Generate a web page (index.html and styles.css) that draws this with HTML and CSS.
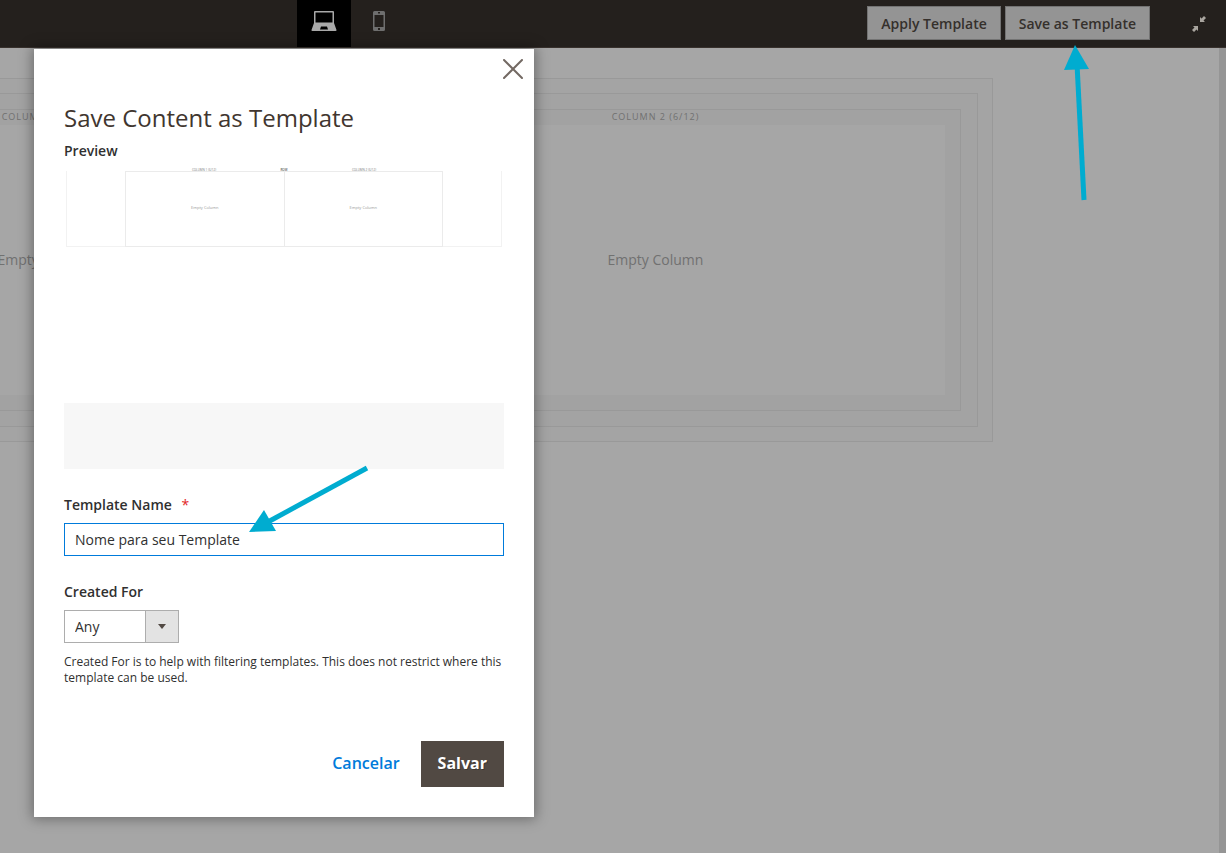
FILE: index.html
```html
<!DOCTYPE html>
<html lang="pt-BR">
<head>
<meta charset="utf-8">
<meta name="viewport" content="width=device-width, initial-scale=1">
<title>Save Content as Template</title>
<link rel="stylesheet" href="styles.css">
</head>
<body>
<div class="page">
  <header class="toolbar">
    <div class="viewports">
      <button class="viewport active" type="button" aria-label="Desktop">
        <svg width="26" height="22" viewBox="0 0 26 22"><path fill="#a9a9a9" fill-rule="evenodd" d="M3 1q0-1 1-1h18q1 0 1 1v11H3zM4.500 1.500v10h17v-10zM3 12h20l2.500 7q.3 1-1 1h-23q-1.300 0-1-1zM10 15.500L9 18.500h8l-1-3z"/></svg>
      </button>
      <button class="viewport" type="button" aria-label="Mobile">
        <svg width="12" height="22" viewBox="0 0 12 22"><path fill="#6e6e6e" fill-rule="evenodd" d="M1.500 0h9Q12 0 12 1.500v17q0 1.500-1.500 1.500h-9Q0 20 0 18.500v-17Q0 0 1.500 0zM1.500 4v12h9V4zM5 1v1.500h2V1zM5 17v2h2v-2z"/></svg>
      </button>
    </div>
    <div class="actions">
      <button class="tool" type="button">Apply Template</button>
      <button class="tool" type="button">Save as Template</button>
    </div>
    <button class="shrink" type="button" aria-label="Exit fullscreen">
      <svg width="16" height="16" viewBox="0 0 16 16" fill="#a9a59f"><path d="M9 1l1.500 1.500L13 0l2 2-2.500 2.500L14 6H9zM2 10h5v5l-1.500-1.500L3 16l-2-2 2.500-2.500z"/></svg>
    </button>
  </header>

  <main class="stage">
    <section class="canvas">
      <div class="row-box">
        <div class="columns">
          <div class="column"><span class="column-name">COLUMN 1 (6/12)</span><div class="empty">Empty Column</div></div>
          <div class="column"><span class="column-name">COLUMN 2 (6/12)</span><div class="empty">Empty Column</div></div>
        </div>
      </div>
    </section>
    <div class="scrollbar"></div>
  </main>

  <form class="modal" role="dialog" aria-labelledby="modal-title">
    <button class="close" type="button" aria-label="Close">
      <svg width="20" height="20" viewBox="0 0 20 20"><path d="M1 1l18 18M19 1L1 19" stroke="#736963" stroke-width="2" fill="none" stroke-linecap="round"/></svg>
    </button>
    <h1 class="title" id="modal-title">Save Content as Template</h1>
    <h2 class="label">Preview</h2>
    <div class="preview">
      <div class="shot">
        <div class="shot-names"><span></span><span>COLUMN 1 (6/12)</span><span class="shot-row">ROW</span><span>COLUMN 2 (6/12)</span><span></span></div>
        <div class="shot-frame">
          <div class="shot-column">Empty Column</div>
          <div class="shot-column">Empty Column</div>
        </div>
      </div>
    </div>
    <label class="label" for="template-name">Template Name <span class="required">*</span></label>
    <input class="text" id="template-name" type="text" value="Nome para seu Template">
    <label class="label second" for="created-for">Created For</label>
    <div class="select-wrap">
      <select class="select" id="created-for"><option>Any</option></select>
      <span class="select-arrow"><svg width="8" height="5" viewBox="0 0 8 5"><path d="M0 0h8L4 5z" fill="#514943"/></svg></span>
    </div>
    <p class="note">Created For is to help with filtering templates. This does not restrict where this template can be used.</p>
    <div class="buttons">
      <button class="cancel" type="button">Cancelar</button>
      <button class="save" type="submit">Salvar</button>
    </div>
  </form>

  <svg class="pointer to-button" width="28" height="158" viewBox="0 0 28 158"><path d="M14 20l7 136" stroke="#00acd0" stroke-width="5"/><path d="M12 1L1 26l25-1z" fill="#00acd0"/></svg>
  <svg class="pointer to-field" width="122" height="70" viewBox="0 0 122 70"><path d="M119 3L18 58" stroke="#00acd0" stroke-width="5"/><path d="M1 67l15-22 12 21z" fill="#00acd0"/></svg>
</div>
</body>
</html>
```
FILE: styles.css
```css
* { box-sizing: border-box; }
body { margin: 0; font-family: "Open Sans", "Noto Sans", sans-serif; font-size: 14px; color: #303030; }
button { font: inherit; border: 0; padding: 0; background: none; cursor: pointer; }
svg { display: block; }

.page { position: relative; display: flex; flex-direction: column; min-height: 100vh; overflow: hidden; background: #a6a6a6; }

.toolbar { display: flex; align-items: stretch; height: 48px; background: #24201d; border-bottom: 1px solid #38312d; }
.viewports { display: flex; margin-left: 297px; }
.viewport { display: flex; align-items: flex-start; justify-content: center; width: 54px; padding-top: 11px; }
.viewport + .viewport { width: 56px; }
.viewport.active { background: #000; }
.actions { display: flex; align-items: flex-start; gap: 4px; margin-left: auto; padding-top: 6px; }
.tool { height: 34px; padding: 2px 13px 0; border: 1px solid #737373; background: #949494; color: #35302c; font-weight: 600; line-height: 30px; }
.shrink { display: flex; align-items: center; margin: 0 19px 0 41px; }

.stage { flex: 1; display: flex; align-items: stretch; }
.canvas { flex: 1; align-self: flex-start; margin: 30px 226px 0 -291px; padding: 14px; border: 1px solid #999; background: #a4a4a4; }
.scrollbar { width: 7px; background: #959595; }
.row-box { padding: 15px 16px 15px 15px; border: 1px solid #999; background: #a3a3a3; }
.columns { display: flex; }
.column { position: relative; flex: 1; padding: 15px; border: 1px solid #999; background: #a2a2a2; }
.column + .column { margin-left: -1px; }
.column-name { position: absolute; top: 0; left: 0; right: 0; text-align: center; font-size: 9px; line-height: 14px; letter-spacing: 1px; color: #707070; }
.empty { display: flex; align-items: center; justify-content: center; height: 270px; padding-bottom: 2px; background: #a6a6a6; color: #717171; }

.modal { position: absolute; top: 49px; left: 34px; width: 500px; padding: 52px 30px 30px; background: #fff; box-shadow: 0 0 12px 2px rgba(0, 0, 0, .35); }
.close { position: absolute; top: 10px; right: 11px; }
.title { margin: 0; font-size: 24px; font-weight: 400; line-height: 34px; color: #41362f; }
.label { display: block; margin: 0; font-size: 14px; font-weight: 600; line-height: 20px; }
.title + .label { margin-top: 6px; }
.preview { height: 300px; margin: 8px 0 26px; padding-bottom: 66px; background: #f7f7f7; }
.shot { height: 100%; padding: 0 2px; background: #fff; }
.shot-names { display: grid; grid-template-columns: 59px 1fr 2px 1fr 59px; height: 2px; font-size: 3px; line-height: 2px; text-align: center; color: #777; }
.shot-row { display: flex; justify-content: center; color: #222; }
.shot-frame { display: flex; height: 76px; padding: 0 58px; border: solid #f2f2f2; border-width: 0 1px 1px; }
.shot-column { flex: 1; display: flex; align-items: center; justify-content: center; padding-bottom: 4px; border: 1px solid #ebebeb; margin-bottom: -1px; font-size: 4px; color: #999; }
.shot-column + .shot-column { border-left: 0; }
.required { margin-left: 6px; color: #e22626; font-weight: 400; }
.text { display: block; width: 100%; height: 33px; margin-top: 8px; padding: 0 10px; border: 1px solid #007bdb; border-radius: 0; background: #fff; color: #303030; font: inherit; outline: 0; }
.second { margin-top: 26px; }
.select-wrap { position: relative; width: 115px; margin-top: 8px; }
.select { display: block; width: 100%; height: 33px; padding: 0 10px; border: 1px solid #adadad; border-radius: 0; appearance: none; background: #fff; color: #303030; font: inherit; }
.select-arrow { position: absolute; top: 0; right: 0; display: flex; align-items: center; justify-content: center; width: 34px; height: 33px; border: 1px solid #adadad; background: #e3e3e3; pointer-events: none; }
.note { margin: 11px 0 0; font-size: 12px; line-height: 16px; }
.buttons { display: flex; justify-content: flex-end; gap: 21px; margin-top: 55px; font-size: 16px; font-weight: 600; }
.cancel { padding-bottom: 2px; color: #007bdb; }
.save { height: 46px; padding: 0 17px 2px; background: #514943; color: #fff; font-weight: 700; text-shadow: 1px 1px 0 rgba(0, 0, 0, .25); }

.pointer { position: absolute; }
.to-button { top: 44px; left: 1063px; }
.to-field { top: 465px; left: 248px; }
```
